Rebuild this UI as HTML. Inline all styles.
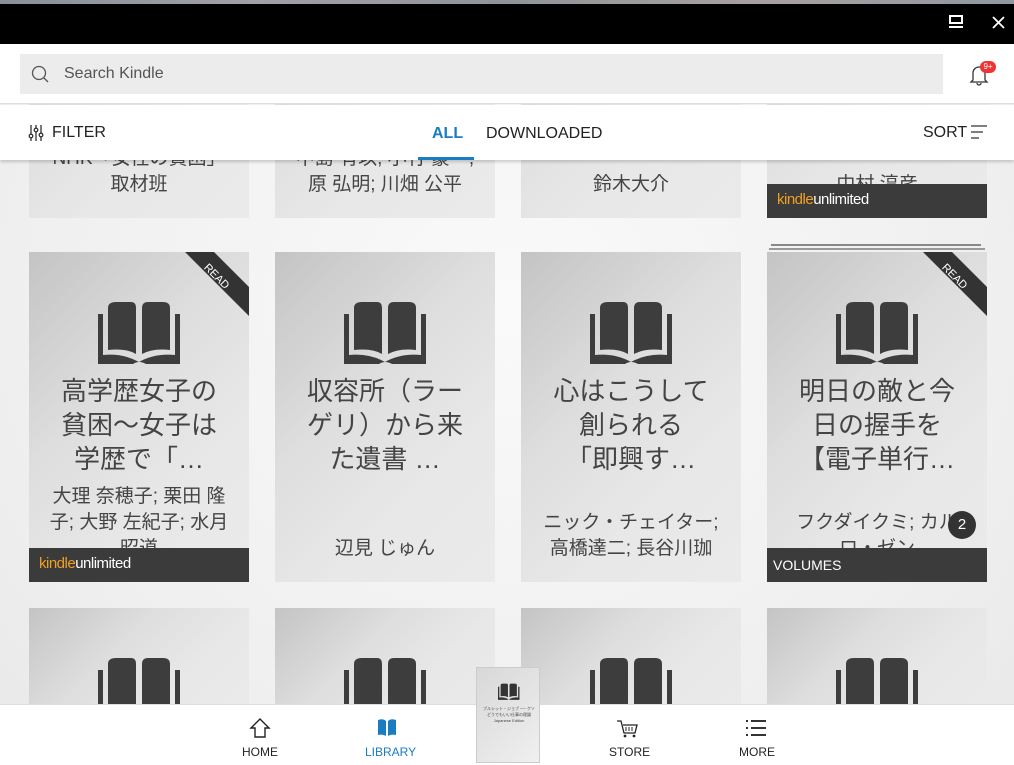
<!DOCTYPE html>
<html style="width:1014px;height:765px;overflow:hidden"><head><meta charset="utf-8">
<style>
*{margin:0;padding:0;box-sizing:border-box}
body{width:1014px;height:765px;overflow:hidden;position:relative;background:#f2f2f2;font-family:"Liberation Sans","Noto Sans CJK JP",sans-serif;color:#333}
.bg{position:absolute;left:0;top:0;width:1014px;height:765px;background:radial-gradient(ellipse at 50% 40%,#fafafa 0%,#efefef 70%,#e8e8e8 100%)}
.card{position:absolute;width:220px;height:330px;background:linear-gradient(135deg,#c4c4c4 0%,#dedede 40%,#e8e8e8 70%,#eaeaea 100%);overflow:hidden}
.book{position:absolute;left:69px;top:50px}
.title{position:absolute;left:8px;right:8px;top:122px;text-align:center;font-size:26px;line-height:34px;color:#444}
.auth{position:absolute;left:6px;right:6px;bottom:20px;text-align:center;font-size:19px;line-height:26px;color:#444}
.band{position:absolute;left:0;bottom:0;width:220px;height:34px;background:#3b3b3b;color:#fff}
.ku{position:absolute;left:10px;top:7px;font-size:15px;letter-spacing:-0.5px}
.ku b{font-weight:normal;color:#f0a020}
.rib{position:absolute;right:0;top:0}
</style></head><body>
<div class="bg"></div>

<div class="card" style="left:29px;top:-112px"><div class="auth">NHK「女性の貧困」<br>取材班</div></div>
<div class="card" style="left:275px;top:-112px"><div class="auth">中島 有以; 小竹 豪一;<br>原 弘明; 川畑 公平</div></div>
<div class="card" style="left:521px;top:-112px"><div class="auth">鈴木大介</div></div>
<div class="card" style="left:767px;top:-112px"><div class="auth">中村 淳彦</div><div class="band"><span class="ku"><b>kindle</b>unlimited</span></div></div>

<div style="position:absolute;left:771px;top:244px;width:210px;height:2px;background:#888"></div>
<div style="position:absolute;left:769px;top:248px;width:216px;height:2px;background:#999"></div>

<div class="card" style="left:29px;top:252px">
 <svg class="rib" width="70" height="70"><polygon points="6,0 35,0 70,35 70,64" fill="#333"/><text x="38" y="28" fill="#fff" font-size="11" font-family="Liberation Sans" transform="rotate(45 38 24)" text-anchor="middle">READ</text></svg>
 <svg class="book" width="84" height="64" viewBox="0 0 84 64"><path d="M10 6 Q10 0 18 0 L33 0 Q38 0 38 6 L38 52 Q28 46 10 48 Z" fill="#3d3d3d"/><path d="M44 6 Q44 0 50 0 L65 0 Q72 0 72 6 L72 48 Q55 46 44 52 Z" fill="#3d3d3d"/><path d="M0 12 H5 V53 Q25 51 41 60 Q57 51 77 53 V12 H82 V62 H48 Q41 58 35 62 H0 Z" fill="#3d3d3d"/></svg>
 <div class="title">高学歴女子の<br>貧困〜女子は<br>学歴で「…</div>
 <div class="auth" style="bottom:20px">大理 奈穂子; 栗田 隆<br>子; 大野 左紀子; 水月<br>昭道</div>
 <div class="band"><span class="ku"><b>kindle</b>unlimited</span></div>
</div>
<div class="card" style="left:275px;top:252px">
 <svg class="book" width="84" height="64" viewBox="0 0 84 64"><path d="M10 6 Q10 0 18 0 L33 0 Q38 0 38 6 L38 52 Q28 46 10 48 Z" fill="#3d3d3d"/><path d="M44 6 Q44 0 50 0 L65 0 Q72 0 72 6 L72 48 Q55 46 44 52 Z" fill="#3d3d3d"/><path d="M0 12 H5 V53 Q25 51 41 60 Q57 51 77 53 V12 H82 V62 H48 Q41 58 35 62 H0 Z" fill="#3d3d3d"/></svg>
 <div class="title">収容所（ラー<br>ゲリ）から来<br>た遺書 …</div>
 <div class="auth">辺見 じゅん</div>
</div>
<div class="card" style="left:521px;top:252px">
 <svg class="book" width="84" height="64" viewBox="0 0 84 64"><path d="M10 6 Q10 0 18 0 L33 0 Q38 0 38 6 L38 52 Q28 46 10 48 Z" fill="#3d3d3d"/><path d="M44 6 Q44 0 50 0 L65 0 Q72 0 72 6 L72 48 Q55 46 44 52 Z" fill="#3d3d3d"/><path d="M0 12 H5 V53 Q25 51 41 60 Q57 51 77 53 V12 H82 V62 H48 Q41 58 35 62 H0 Z" fill="#3d3d3d"/></svg>
 <div class="title">心はこうして<br>創られる<br>「即興す…</div>
 <div class="auth">ニック・チェイター;<br>高橋達二; 長谷川珈</div>
</div>
<div class="card" style="left:767px;top:252px">
 <svg class="rib" width="70" height="70"><polygon points="6,0 35,0 70,35 70,64" fill="#333"/><text x="38" y="28" fill="#fff" font-size="11" font-family="Liberation Sans" transform="rotate(45 38 24)" text-anchor="middle">READ</text></svg>
 <svg class="book" width="84" height="64" viewBox="0 0 84 64"><path d="M10 6 Q10 0 18 0 L33 0 Q38 0 38 6 L38 52 Q28 46 10 48 Z" fill="#3d3d3d"/><path d="M44 6 Q44 0 50 0 L65 0 Q72 0 72 6 L72 48 Q55 46 44 52 Z" fill="#3d3d3d"/><path d="M0 12 H5 V53 Q25 51 41 60 Q57 51 77 53 V12 H82 V62 H48 Q41 58 35 62 H0 Z" fill="#3d3d3d"/></svg>
 <div class="title">明日の敵と今<br>日の握手を<br>【電子単行…</div>
 <div class="auth">フクダイクミ; カル<br>ロ・ゼン</div>
 <div style="position:absolute;left:181px;top:259px;width:28px;height:28px;border-radius:50%;background:#333;color:#fff;font-size:15px;line-height:28px;text-align:center">2</div>
 <div class="band"><span style="position:absolute;left:6px;top:9px;font-size:14px">VOLUMES</span></div>
</div>

<div class="card" style="left:29px;top:608px;height:100px"><svg class="book" width="84" height="64" viewBox="0 0 84 64"><path d="M10 6 Q10 0 18 0 L33 0 Q38 0 38 6 L38 52 Q28 46 10 48 Z" fill="#3d3d3d"/><path d="M44 6 Q44 0 50 0 L65 0 Q72 0 72 6 L72 48 Q55 46 44 52 Z" fill="#3d3d3d"/><path d="M0 12 H5 V53 Q25 51 41 60 Q57 51 77 53 V12 H82 V62 H48 Q41 58 35 62 H0 Z" fill="#3d3d3d"/></svg></div>
<div class="card" style="left:275px;top:608px;height:100px"><svg class="book" width="84" height="64" viewBox="0 0 84 64"><path d="M10 6 Q10 0 18 0 L33 0 Q38 0 38 6 L38 52 Q28 46 10 48 Z" fill="#3d3d3d"/><path d="M44 6 Q44 0 50 0 L65 0 Q72 0 72 6 L72 48 Q55 46 44 52 Z" fill="#3d3d3d"/><path d="M0 12 H5 V53 Q25 51 41 60 Q57 51 77 53 V12 H82 V62 H48 Q41 58 35 62 H0 Z" fill="#3d3d3d"/></svg></div>
<div class="card" style="left:521px;top:608px;height:100px"><svg class="book" width="84" height="64" viewBox="0 0 84 64"><path d="M10 6 Q10 0 18 0 L33 0 Q38 0 38 6 L38 52 Q28 46 10 48 Z" fill="#3d3d3d"/><path d="M44 6 Q44 0 50 0 L65 0 Q72 0 72 6 L72 48 Q55 46 44 52 Z" fill="#3d3d3d"/><path d="M0 12 H5 V53 Q25 51 41 60 Q57 51 77 53 V12 H82 V62 H48 Q41 58 35 62 H0 Z" fill="#3d3d3d"/></svg></div>
<div class="card" style="left:767px;top:608px;height:100px"><svg class="book" width="84" height="64" viewBox="0 0 84 64"><path d="M10 6 Q10 0 18 0 L33 0 Q38 0 38 6 L38 52 Q28 46 10 48 Z" fill="#3d3d3d"/><path d="M44 6 Q44 0 50 0 L65 0 Q72 0 72 6 L72 48 Q55 46 44 52 Z" fill="#3d3d3d"/><path d="M0 12 H5 V53 Q25 51 41 60 Q57 51 77 53 V12 H82 V62 H48 Q41 58 35 62 H0 Z" fill="#3d3d3d"/></svg></div>

<div style="position:absolute;left:0;top:0;width:1014px;height:44px;background:#000"></div>
<div style="position:absolute;left:0;top:0;width:1014px;height:4px;background:linear-gradient(90deg,#8a9098,#a0a0a8,#909498,#a8a0a0,#9098a0)"></div>
<svg style="position:absolute;left:948px;top:14px" width="18" height="16"><rect x="2" y="2" width="12" height="7" fill="none" stroke="#fff" stroke-width="2"/><rect x="1" y="12" width="14" height="2" fill="#fff"/></svg>
<svg style="position:absolute;left:991px;top:15px" width="16" height="16"><path d="M2 2L13 13M13 2L2 13" stroke="#fff" stroke-width="1.8"/></svg>

<div style="position:absolute;left:0;top:44px;width:1014px;height:60px;background:#fff;border-bottom:1px solid #ddd"></div>
<div style="position:absolute;left:20px;top:54px;width:923px;height:40px;background:#ececec"></div>
<svg style="position:absolute;left:30px;top:64px" width="20" height="20"><circle cx="9" cy="9" r="6.5" fill="none" stroke="#555" stroke-width="1.3"/><path d="M13.5 13.5L18 18" stroke="#555" stroke-width="1.3"/></svg>
<div style="position:absolute;left:64px;top:65px;font-size:16px;color:#555">Search Kindle</div>
<svg style="position:absolute;left:968px;top:64px" width="24" height="22"><path d="M5 16V9a6 6 0 0 1 12 0v7l2 2H3z" fill="none" stroke="#333" stroke-width="1.3"/><path d="M9 19a2 2 0 0 0 4 0" fill="none" stroke="#333" stroke-width="1.3"/></svg>
<div style="position:absolute;left:980px;top:61px;width:16px;height:12px;border-radius:6px;background:#e33;color:#fff;font-size:8px;line-height:12px;text-align:center">9+</div>

<div style="position:absolute;left:0;top:105px;width:1014px;height:55px;background:#fff;box-shadow:0 2px 3px rgba(0,0,0,.18)"></div>
<svg style="position:absolute;left:28px;top:124px" width="16" height="18"><g stroke="#333" stroke-width="1.3" fill="#fff"><path d="M3 1V17M8 1V17M13 1V17"/><circle cx="3" cy="12" r="1.8"/><circle cx="8" cy="6" r="1.8"/><circle cx="13" cy="11" r="1.8"/></g></svg>
<div style="position:absolute;left:52px;top:124px;font-size:16px;color:#222">FILTER</div>
<div style="position:absolute;left:432px;top:125px;font-size:16px;font-weight:bold;color:#1a7cc1">ALL</div>
<div style="position:absolute;left:418px;top:157px;width:56px;height:3px;background:#1a7cc1"></div>
<div style="position:absolute;left:486px;top:125px;font-size:16px;color:#222">DOWNLOADED</div>
<div style="position:absolute;left:923px;top:124px;font-size:16px;color:#222">SORT</div>
<svg style="position:absolute;left:970px;top:125px" width="18" height="14"><path d="M1 1H17M1 7H13M1 13H9" stroke="#333" stroke-width="1.3"/></svg>

<div style="position:absolute;left:0;top:704px;width:1014px;height:61px;background:#fff;border-top:1px solid #ddd"></div>
<svg style="position:absolute;left:249px;top:717px" width="22" height="22"><path d="M2 11L11 2L20 11H16V20H6V11Z" fill="none" stroke="#222" stroke-width="1.4"/></svg>
<div style="position:absolute;left:242px;top:745px;font-size:12px;color:#222">HOME</div>
<svg style="position:absolute;left:377px;top:718px" width="20" height="20"><path d="M1 2Q6 0 9 3V18Q6 16 1 17Z M11 3Q14 0 19 2V17Q14 16 11 18Z" fill="#1a7cc1"/></svg>
<div style="position:absolute;left:365px;top:745px;font-size:12px;color:#1a7cc1">LIBRARY</div>
<div style="position:absolute;left:476px;top:667px;width:64px;height:96px;background:linear-gradient(135deg,#d8d8d8,#f0f0f0);border:1px solid #ccc">
 <svg style="position:absolute;left:21px;top:15px" width="22" height="18" viewBox="0 0 84 64"><path d="M10 6 Q10 0 18 0 L33 0 Q38 0 38 6 L38 52 Q28 46 10 48 Z" fill="#333"/><path d="M44 6 Q44 0 50 0 L65 0 Q72 0 72 6 L72 48 Q55 46 44 52 Z" fill="#333"/><path d="M0 12 H5 V53 Q25 51 41 60 Q57 51 77 53 V12 H82 V62 H48 Q41 58 35 62 H0 Z" fill="#333"/></svg>
 <div style="position:absolute;left:6px;top:38px;width:52px;font-size:4px;line-height:6px;color:#444;text-align:center">ブルシット・ジョブ ── クソどうでもいい仕事の理論 Japanese Edition</div>
</div>
<svg style="position:absolute;left:616px;top:719px" width="24" height="20"><path d="M1 2H5L8 14H19L21 6H7" fill="none" stroke="#222" stroke-width="1.3"/><path d="M10 8V12M13 8V12M16 8V12" stroke="#222" stroke-width="1"/><circle cx="9" cy="17" r="1.4" fill="#222"/><circle cx="18" cy="17" r="1.4" fill="#222"/></svg>
<div style="position:absolute;left:609px;top:745px;font-size:12px;color:#222">STORE</div>
<svg style="position:absolute;left:745px;top:719px" width="22" height="18"><path d="M1 2H3M1 9H3M1 16H3M6 2H21M6 9H21M6 16H21" stroke="#333" stroke-width="2"/></svg>
<div style="position:absolute;left:739px;top:745px;font-size:12px;color:#222">MORE</div>
</body></html>
